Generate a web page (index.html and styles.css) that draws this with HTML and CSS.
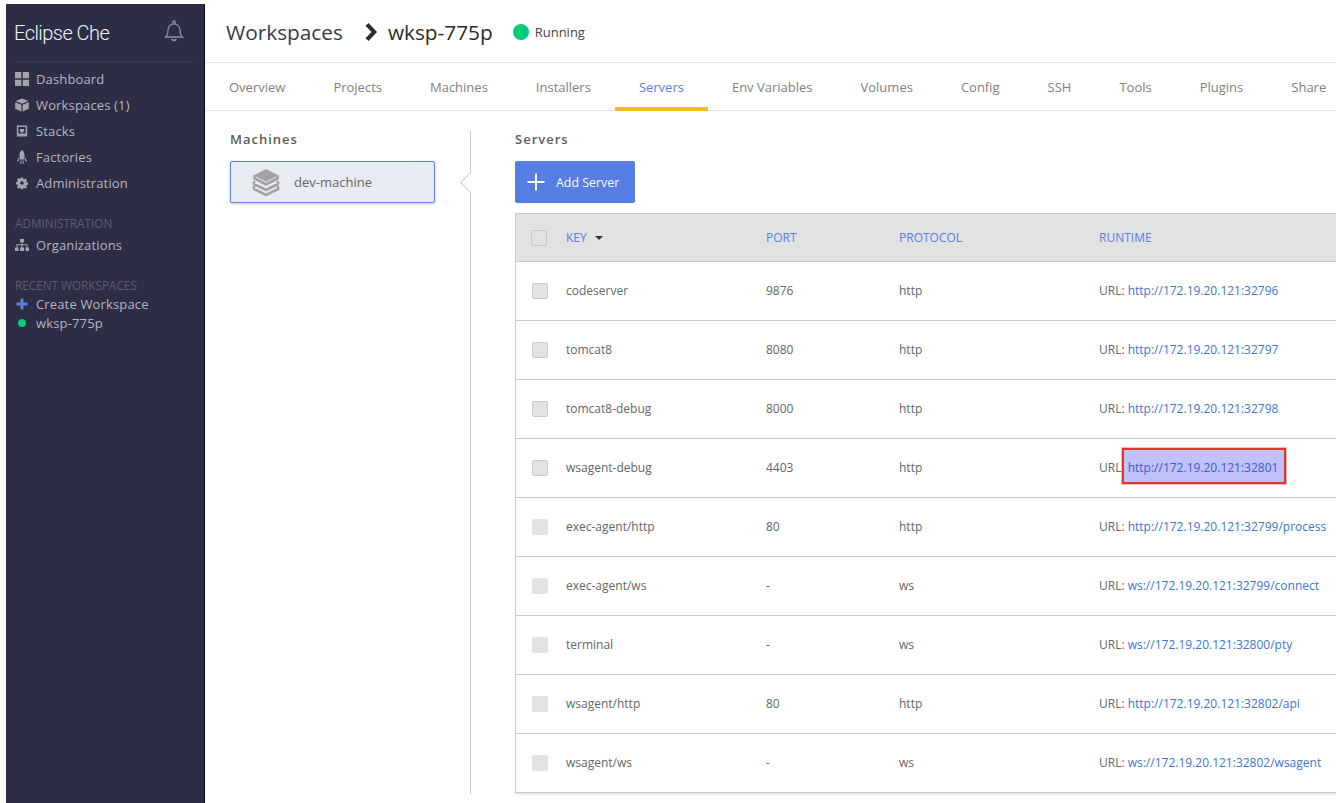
FILE: index.html

```html
<!DOCTYPE html>
<html lang="en">
<head>
  <meta charset="UTF-8" />
  <title>Eclipse Che - Workspaces</title>
  <link rel="stylesheet" href="styles.css">
</head>
<body>

<nav class="sidebar">
  <div class="logo-row">
    <div class="logo">Eclipse Che</div>
    <svg class="bell" width="22" height="24" viewBox="0 0 22 24" fill="none" stroke="#8f8fa0" stroke-width="1.300"><path d="M2.500 18c1.800-1.500 2.500-3.200 2.500-7 0-3.500 2.500-6.200 6-6.200s6 2.700 6 6.200c0 3.800.7 5.500 2.500 7z"/><path d="M9.800 4.800V3.200a1.200 1.200 0 0 1 2.400 0v1.600"/><path d="M8.800 20c.6 1.800 3.800 1.800 4.400 0" stroke-width="1.800"/></svg>
  </div>
  <ul class="nav-list">
    <li><svg class="nav-icon" viewBox="0 0 14 14" fill="#a3a3ae"><path d="M0 0h6.300v6.300H0zM7.700 0H14v6.300H7.700zM0 7.700h6.300V14H0zM7.700 7.700H14V14H7.700z"/></svg>Dashboard</li>
    <li><svg class="nav-icon" viewBox="0 0 14 14" fill="#a3a3ae"><path d="M7 .5l6.500 2.600L7 5.700.5 3.100zM.2 4.200l6.200 2.500v6.900L.2 10.800zM13.800 4.200L7.600 6.700v6.900l6.200-2.800z"/></svg>Workspaces (1)</li>
    <li><svg class="nav-icon" viewBox="0 0 14 14" fill="#a3a3ae"><path fill-rule="evenodd" d="M1.800 1.500h10.400v11H1.800zM3.300 3v6.500h7.400V3zM5 5h4v1.500h1L7 9 4 6.500h1z"/></svg>Stacks</li>
    <li><svg class="nav-icon" viewBox="0 0 14 14" fill="#a3a3ae"><path d="M7 0c1.700 1.300 2.500 3 2.500 5v4.500h-5V5C4.500 3 5.300 1.300 7 0zM3.800 7l-1.800 4.800 2-.8zM10.200 7l1.800 4.800-2-.8zM5.400 10.500h1V14h-1zM7.600 10.500h1V14h-1z"/></svg>Factories</li>
    <li><svg class="nav-icon gear" viewBox="0 0 14 14" fill="#a3a3ae"><path fill-rule="evenodd" d="M5.800 1h2.400l.3 1.600 1 .4 1.400-.9 1.700 1.700-.9 1.400.4 1 1.600.3v2.400l-1.600.3-.4 1 .9 1.400-1.700 1.700-1.400-.9-1 .4-.3 1.600H5.800l-.3-1.600-1-.4-1.400.9-1.700-1.700.9-1.400-.4-1L.3 8.200V5.800l1.600-.3.4-1-.9-1.400 1.700-1.700 1.400.9 1-.4zM7 5a2 2 0 1 0 0 4 2 2 0 0 0 0-4z"/></svg>Administration</li>
  </ul>
  <div class="nav-title">ADMINISTRATION</div>
  <ul class="nav-list">
    <li><svg class="nav-icon" viewBox="0 0 14 14" fill="#a3a3ae"><path d="M5 1h4v3.200H7.500v2h5V9.500H14V13h-3.500V9.500h1V7.300h-4v2.200H9V13H5V9.500h1.500V7.300h-4v2.200h1V13H0V9.500h1.500V6.200h5v-2H5z"/></svg>Organizations</li>
  </ul>
  <div class="nav-title recent">RECENT WORKSPACES</div>
  <ul class="nav-list recent-list">
    <li><svg class="nav-icon" viewBox="0 0 14 14" fill="#5a7de6"><path d="M5.600 1.500h2.800v4.100h4.100v2.800H8.400v4.100H5.600V8.400H1.500V5.600h4.100z"/></svg>Create Workspace</li>
    <li><span class="recent-dot"></span>wksp-775p</li>
  </ul>
</nav>

<main class="content">
  <header class="toolbar">
    <span class="toolbar-title">Workspaces</span>
    <svg class="chevron" width="12" height="18" viewBox="0 0 12 18" fill="#2b2b2b"><path d="M.5 2.700L3.500 0 12 9l-8.500 9-3-2.700L6.500 9z"/></svg>
    <span class="toolbar-name">wksp-775p</span>
    <span class="status-dot"></span>
    <span class="status-text">Running</span>
  </header>

  <div class="tabs">
    <a>Overview</a>
    <a>Projects</a>
    <a>Machines</a>
    <a>Installers</a>
    <a class="active">Servers</a>
    <a>Env Variables</a>
    <a>Volumes</a>
    <a>Config</a>
    <a>SSH</a>
    <a>Tools</a>
    <a>Plugins</a>
    <a>Share</a>
  </div>

  <div class="panels">
    <section class="machines">
      <div class="section-title">Machines</div>
      <div class="machine-card">
        <svg width="30" height="28" viewBox="0 0 30 28" fill="none" stroke="#a3a3a3" stroke-width="2.600" stroke-linejoin="round"><path d="M15 2l12 6v3l-12 6-12-6V8z" fill="#a3a3a3" stroke-width="1.500"/><path d="M3 13v3l12 6 12-6v-3"/><path d="M3 18v3l12 6 12-6v-3"/><path d="M5 9.200l10 5 10-5" stroke="#e8ebf2" stroke-width="1"/></svg>
        <span>dev-machine</span>
      </div>
    </section>

    <section class="servers">
      <div class="notch"></div>
      <div class="section-title">Servers</div>
      <button class="add-btn">
        <svg width="18" height="18" viewBox="0 0 18 18" fill="#fff"><path d="M8 .5h2V8h7.500v2H10v7.500H8V10H.5V8H8z"/></svg>
        Add Server
      </button>
      <div class="table-wrap">
        <table class="servers-table">
          <thead>
            <tr>
              <th class="check-col"><span class="check head"></span></th>
              <th class="key-col">KEY <span class="sort"></span></th>
              <th class="port-col">PORT</th>
              <th class="proto-col">PROTOCOL</th>
              <th>RUNTIME</th>
            </tr>
          </thead>
          <tbody>
            <tr><td class="check-col"><span class="check"></span></td><td>codeserver</td><td>9876</td><td>http</td><td>URL: <a>http://172.19.20.121:32796</a></td></tr>
            <tr><td class="check-col"><span class="check"></span></td><td>tomcat8</td><td>8080</td><td>http</td><td>URL: <a>http://172.19.20.121:32797</a></td></tr>
            <tr><td class="check-col"><span class="check"></span></td><td>tomcat8-debug</td><td>8000</td><td>http</td><td>URL: <a>http://172.19.20.121:32798</a></td></tr>
            <tr><td class="check-col"><span class="check"></span></td><td>wsagent-debug</td><td>4403</td><td>http</td><td>URL: <a class="marked">http://172.19.20.121:32801</a></td></tr>
            <tr><td class="check-col"><span class="check off"></span></td><td>exec-agent/http</td><td>80</td><td>http</td><td>URL: <a>http://172.19.20.121:32799/process</a></td></tr>
            <tr><td class="check-col"><span class="check off"></span></td><td>exec-agent/ws</td><td>-</td><td>ws</td><td>URL: <a>ws://172.19.20.121:32799/connect</a></td></tr>
            <tr><td class="check-col"><span class="check off"></span></td><td>terminal</td><td>-</td><td>ws</td><td>URL: <a>ws://172.19.20.121:32800/pty</a></td></tr>
            <tr><td class="check-col"><span class="check off"></span></td><td>wsagent/http</td><td>80</td><td>http</td><td>URL: <a>http://172.19.20.121:32802/api</a></td></tr>
            <tr><td class="check-col"><span class="check off"></span></td><td>wsagent/ws</td><td>-</td><td>ws</td><td>URL: <a>ws://172.19.20.121:32802/wsagent</a></td></tr>
          </tbody>
        </table>
      </div>
    </section>
  </div>
</main>

</body>
</html>
```

FILE: styles.css

```css
* {
  box-sizing: border-box;
}

html, body {
  height: 100%;
}

body {
  margin: 0;
  display: flex;
  overflow: hidden;
  background: #fff;
  color: #555;
  font-family: "Open Sans", sans-serif;
  font-size: 12px;
}

/* left navigation */
.sidebar {
  flex: 0 0 199px;
  margin: 4px 0 0 6px;
  padding: 0 9px;
  background: #2e2d46;
  border-right: 1px solid #0d0d14;
  color: #b4b4be;
}

.logo-row {
  display: flex;
  justify-content: space-between;
  align-items: center;
  height: 58px;
  margin-bottom: 4px;
  border-bottom: 1px solid #3c3b57;
  padding: 0 10px 0 0;
}

.logo {
  margin-left: -1px;
  font-family: Roboto, sans-serif;
  font-weight: 300;
  font-size: 20px;
  letter-spacing: -0.55px;
  color: #f2f2f4;
}

.bell {
  margin-top: -4px;
}

.nav-list {
  margin: 0;
  padding: 0;
  list-style: none;
}

.nav-list li {
  display: flex;
  align-items: center;
  height: 26px;
  font-size: 13px;
  letter-spacing: 0.15px;
}

.nav-icon {
  flex: 0 0 14px;
  width: 14px;
  height: 14px;
  margin-right: 7px;
}

.gear {
  transform: scale(0.9);
}

.nav-title {
  margin-top: 19px;
  height: 17px;
  line-height: 16px;
  font-size: 11.750px;
  color: #5d5c72;
}

.nav-title.recent {
  margin-top: 19px;
}

.recent-list li {
  height: 19px;
}

.recent-dot {
  flex: 0 0 8px;
  width: 8px;
  height: 8px;
  margin: 1px 10px 0 3px;
  border-radius: 50%;
  background: #00cc7a;
}

/* main area */
.content {
  flex: 1;
  min-width: 0;
}

.toolbar {
  display: flex;
  align-items: center;
  height: 63px;
  padding: 2px 0 0 21px;
  border-bottom: 1px solid #e4e4e4;
}

.toolbar-title {
  font-size: 20.800px;
  color: #353a50;
}

.chevron {
  margin: 0 11px 0 22px;
}

.toolbar-name {
  font-size: 20.800px;
  color: #2b2b2b;
}

.status-dot {
  width: 16px;
  height: 16px;
  margin: 0 6px 0 20px;
  border-radius: 50%;
  background: #00cc7a;
}

.status-text {
  font-size: 13px;
  color: #444;
}

.tabs {
  display: flex;
  height: 48px;
  border-bottom: 1px solid #e4e4e4;
  white-space: nowrap;
}

.tabs a {
  padding: 15px 24px 0;
  font-size: 13px;
  color: #7f7f7f;
}

.tabs a.active {
  color: #5a7de6;
  height: 48px;
  border-bottom: 4px solid #fdb827;
}

.panels {
  display: flex;
}

.section-title {
  height: 17px;
  line-height: 16px;
  font-size: 13px;
  font-weight: 600;
  letter-spacing: 1px;
  color: #5c5c5c;
}

.machines {
  flex: 0 0 265px;
  padding: 20px 35px 0 25px;
}

.machine-card {
  display: flex;
  align-items: center;
  gap: 13px;
  height: 42px;
  margin-top: 13px;
  padding-left: 20px;
  background: #e8ebf2;
  border: 1px solid #5a7de6;
  border-radius: 2px;
  box-shadow: 0 1px 3px rgba(0, 0, 0, 0.2);
  font-size: 13px;
  color: #666;
}

.servers {
  position: relative;
  flex: 1;
  min-width: 0;
  height: 663px;
  margin-top: 20px;
  padding-left: 44px;
  border-left: 1px solid #c8c8c8;
}

.notch {
  position: absolute;
  left: -8px;
  top: 44px;
  width: 15px;
  height: 15px;
  background: #fff;
  border-left: 1px solid #c8c8c8;
  border-bottom: 1px solid #c8c8c8;
  transform: rotate(45deg);
}

.add-btn {
  display: flex;
  align-items: center;
  gap: 11px;
  width: 120px;
  height: 42px;
  margin-top: 13px;
  padding: 0 0 0 12px;
  background: #567de4;
  border: none;
  border-radius: 2px;
  font-family: inherit;
  font-size: 12.400px;
  color: #fff;
}

.table-wrap {
  margin-top: 10px;
  padding-bottom: 4px;
  overflow: hidden;
}

.servers-table {
  width: 900px;
  table-layout: fixed;
  border-collapse: collapse;
  border: 1px solid #c8c8c8;
  box-shadow: 0 1px 3px rgba(0, 0, 0, 0.15);
}

.servers-table th {
  height: 48px;
  padding: 0;
  background: #e2e2e2;
  border-bottom: 1px solid #c8c8c8;
  text-align: left;
  font-size: 12px;
  font-weight: 400;
  color: #5a7de6;
}

.servers-table td {
  height: 59px;
  padding: 0 0 2px;
  border-bottom: 1px solid #c8c8c8;
  font-size: 12px;
  color: #666;
}

.servers-table td.check-col {
  padding-bottom: 0;
}

.servers-table a {
  color: #3d76cf;
}

.check-col {
  width: 50.500px;
}

.key-col {
  width: 200px;
}

.port-col {
  width: 133px;
}

.proto-col {
  width: 200px;
}

.check {
  display: block;
  width: 16px;
  height: 16px;
  margin-left: 16px;
  background: #e2e2e2;
  border: 1px solid #c8c8c8;
  border-radius: 2px;
}

.check.head {
  margin-left: 15px;
  margin-top: 1px;
}

.check.off {
  border-color: #e2e2e2;
}

.sort {
  display: inline-block;
  margin-left: 5px;
  vertical-align: 2px;
  border-left: 4px solid transparent;
  border-right: 4px solid transparent;
  border-top: 4px solid #333;
}

/* red box drawn over the link */
.marked {
  position: relative;
  z-index: 0;
}

.servers-table a.marked {
  color: #3a5fc8;
}

.marked::before {
  content: "";
  position: absolute;
  z-index: -1;
  left: -6px;
  right: -8px;
  top: -11px;
  bottom: -8px;
  background: #c0c0fb;
  border: 2px solid #e0352b;
  box-shadow: 0 0 0 1px rgba(224, 53, 43, 0.35);
}
```
